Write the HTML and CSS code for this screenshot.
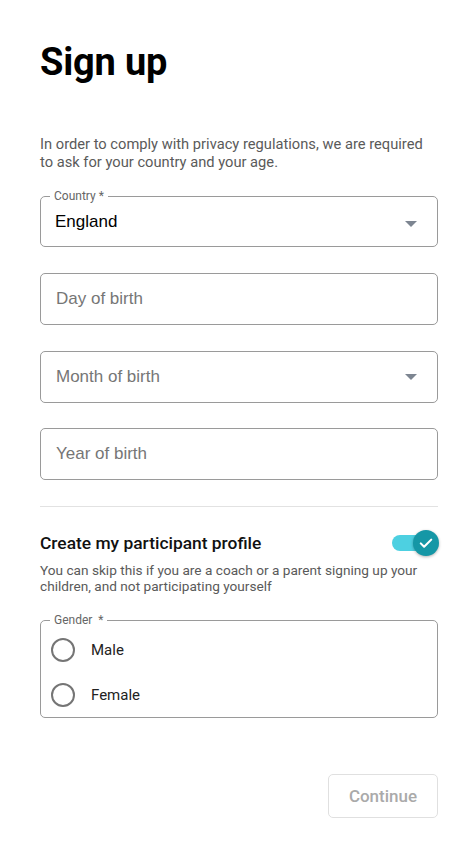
FILE: index.html
```html
<!DOCTYPE html>
<html lang="en">
<head>
<meta charset="utf-8">
<title>Sign up</title>
<link rel="stylesheet" href="styles.css">
</head>
<body>
<main class="page">
  <h1 class="title">Sign up</h1>
  <p class="intro">In order to comply with privacy regulations, we are required to ask for your country and your age.</p>

  <fieldset class="outlined country">
    <legend class="legend">Country *</legend>
    <div class="select-row">
      <span class="value">England</span>
      <span class="caret"></span>
    </div>
  </fieldset>

  <div class="input-box first"><span class="placeholder">Day of birth</span></div>
  <div class="input-box"><span class="placeholder">Month of birth</span><span class="caret"></span></div>
  <div class="input-box last"><span class="placeholder">Year of birth</span></div>

  <hr class="divider">

  <div class="toggle-row">
    <span class="toggle-title">Create my participant profile</span>
    <span class="switch">
      <span class="track"></span>
      <span class="thumb">
        <svg viewBox="0 0 24 24" width="18" height="18" aria-hidden="true"><path d="M5 12.5l4.5 4.5L19 7.5" fill="none" stroke="#fff" stroke-width="2.8" stroke-linecap="round" stroke-linejoin="round"/></svg>
      </span>
    </span>
  </div>
  <p class="hint">You can skip this if you are a coach or a parent signing up your children, and not participating yourself</p>

  <fieldset class="outlined gender">
    <legend class="legend">Gender&nbsp; *</legend>
    <label class="radio-row"><span class="radio"></span><span class="radio-label">Male</span></label>
    <label class="radio-row"><span class="radio"></span><span class="radio-label">Female</span></label>
  </fieldset>

  <div class="actions">
    <button class="continue" type="button" disabled>Continue</button>
  </div>
</main>
</body>
</html>
```

FILE: styles.css
```css
html, body {
  margin: 0;
  padding: 0;
  background: #fff;
}

body {
  font-family: Roboto, "Liberation Sans", Arial, sans-serif;
  color: #111;
}

.page {
  width: 398px;
  padding: 40px 0 0 40px;
}

.title {
  margin: 0;
  font-size: 38px;
  font-weight: 700;
  line-height: 44px;
  color: #000;
  letter-spacing: -0.2px;
}

.intro {
  margin: 52px 0 0 0;
  font-size: 14.7px;
  line-height: 17.5px;
  color: #5a5a5a;
}

.outlined {
  margin: 0;
  padding: 0;
  border: 1px solid #9a9a9a;
  border-radius: 5px;
  min-width: 0;
}

.country {
  margin-top: 18px;
}

.legend {
  margin-left: 9px;
  padding: 0 4px;
  font-size: 12px;
  line-height: 14px;
  color: #666;
}

.select-row {
  display: flex;
  align-items: center;
  justify-content: space-between;
  height: 43px;
  padding: 0 20px 0 14px;
  box-sizing: border-box;
}

.value {
  font-family: "Liberation Sans", Arial, sans-serif;
  font-size: 17px;
  line-height: 19px;
  color: #000;
  margin-top: -6px;
}

.caret {
  width: 0;
  height: 0;
  border-left: 6px solid transparent;
  border-right: 6px solid transparent;
  border-top: 6px solid #7d8591;
}

.select-row .caret {
  margin-top: -2px;
}

.input-box {
  margin-top: 26px;
  height: 52px;
  box-sizing: border-box;
  border: 1px solid #9a9a9a;
  border-radius: 5px;
  padding: 0 20px 0 15px;
  display: flex;
  align-items: center;
  justify-content: space-between;
}

.input-box.first {
  margin-top: 26px;
}

.input-box.last {
  margin-top: 25px;
}

.placeholder {
  font-family: "Liberation Sans", Arial, sans-serif;
  font-size: 17px;
  line-height: 19px;
  color: #767676;
  margin-top: -2px;
}

.divider {
  margin: 26px 0 0 0;
  border: 0;
  border-top: 1px solid #e2e2e2;
  height: 0;
}

.toggle-row {
  margin-top: 26px;
  display: flex;
  align-items: center;
  justify-content: space-between;
  height: 20px;
}

.toggle-title {
  font-size: 17.4px;
  font-weight: 500;
  line-height: 20px;
  color: #111;
}

.switch {
  position: relative;
  width: 46px;
  height: 26px;
  display: flex;
  align-items: center;
  margin-right: -1px;
}

.track {
  display: block;
  width: 36px;
  height: 16px;
  margin-left: -1px;
  border-radius: 8px;
  background: #4dd0e1;
}

.thumb {
  position: absolute;
  right: 0;
  top: 0;
  width: 26px;
  height: 26px;
  border-radius: 50%;
  background: #1597a6;
  box-shadow: 0 1px 3px rgba(0, 0, 0, 0.3);
  display: flex;
  align-items: center;
  justify-content: center;
}

.hint {
  margin: 9px 0 0 0;
  font-size: 13.65px;
  line-height: 16px;
  color: #5a5a5a;
}

.gender {
  margin-top: 19px;
  padding-top: 1px;
}

.radio-row {
  display: flex;
  align-items: center;
  height: 44.5px;
  padding-left: 10px;
}

.radio {
  width: 24px;
  height: 24px;
  box-sizing: border-box;
  border: 2px solid #757575;
  border-radius: 50%;
  flex: none;
}

.radio-label {
  margin-left: 16px;
  font-size: 15px;
  color: #222;
}

.actions {
  display: flex;
  justify-content: flex-end;
  margin-top: 56px;
}

.continue {
  width: 110px;
  height: 44px;
  border: 1px solid #e0e0e0;
  border-radius: 5px;
  background: #fff;
  font-family: Roboto, "Liberation Sans", Arial, sans-serif;
  font-size: 17px;
  font-weight: 500;
  color: #aaa;
  padding: 0;
}
```
